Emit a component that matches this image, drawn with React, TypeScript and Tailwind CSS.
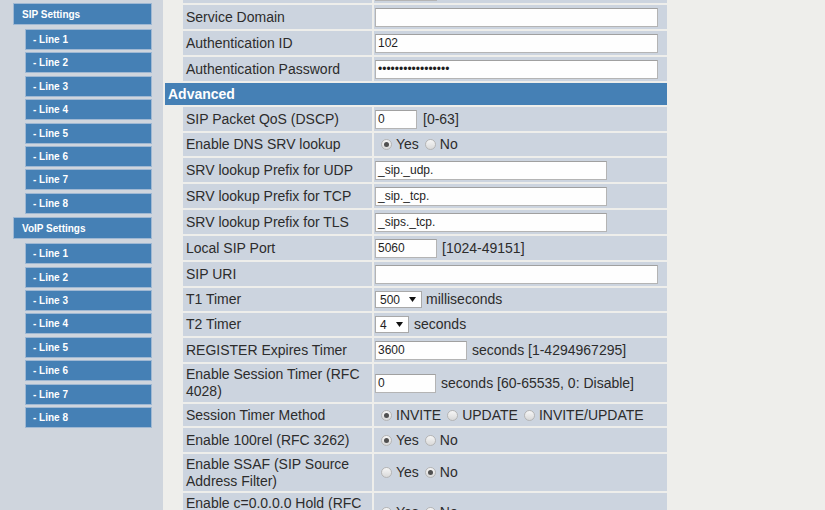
import React from 'react'

const sipLines = ['1', '2', '3', '4', '5', '6', '7', '8']

function NavHeader({ title, first }: { title: string; first?: boolean }) {
  return (
    <div
      className={`${first ? 'mt-0' : 'mt-[3.5px]'} ml-[13px] w-[139px] h-[22px] bg-[#4580b5] border border-[#9fb8d3] flex items-center pl-[8px] text-[10px] font-bold text-white`}
    >
      {title}
    </div>
  )
}

function NavItem({ label, first }: { label: string; first?: boolean }) {
  return (
    <div
      className={`${first ? 'mt-[4px]' : 'mt-[2.4px]'} ml-[25px] w-[127px] h-[21px] bg-[#4580b5] border border-[#9fb8d3] flex items-center pl-[7px] text-[10px] font-bold text-white`}
    >
      - Line {label}
    </div>
  )
}

function TextInput({ w, value = '' }: { w: string; value?: string }) {
  return (
    <span
      className={`${w} h-[19px] inline-flex items-center bg-[#fefefe] border border-[#b4b4b4] border-t-[#a0a0a0] pl-[2px] text-[12px] text-[#1e1e1e] shrink-0`}
    >
      {value}
    </span>
  )
}

function Radio({ checked, label }: { checked?: boolean; label: string }) {
  return (
    <span className="inline-flex items-center">
      <span className="ml-[6px] mr-[4px] w-[11px] h-[11px] rounded-full border border-[#b5b5b5] bg-gradient-to-b from-[#f6f6f6] to-[#d9d9d9] flex items-center justify-center">
        {checked && <span className="w-[5px] h-[5px] rounded-full bg-[#505050]" />}
      </span>
      <span>{label}</span>
    </span>
  )
}

function Select({ w, value }: { w: string; value: string }) {
  return (
    <span
      className={`${w} h-[17px] inline-flex items-center justify-between bg-white border border-[#a9a9a9] pl-[4px] pr-[5px] text-[12px] text-[#1e1e1e]`}
    >
      {value}
      <svg width="7" height="5" viewBox="0 0 7 5">
        <path d="M0 0H7L3.5 5Z" fill="#111" />
      </svg>
    </span>
  )
}

type Row = { label: React.ReactNode; h: string; value: React.ReactNode }

const rows: Row[] = [
  // row scrolled above the top edge, only its bottom shows
  { label: '', h: 'h-[24px]', value: <TextInput w="w-[62px]" /> },
  { label: 'Service Domain', h: 'h-[24px]', value: <TextInput w="w-[283px]" /> },
  { label: 'Authentication ID', h: 'h-[24px]', value: <TextInput w="w-[283px]" value="102" /> },
  {
    label: 'Authentication Password',
    h: 'h-[24px]',
    value: <TextInput w="w-[283px]" value="•••••••••••••••••" />,
  },
]

const advanced: Row[] = [
  {
    label: 'SIP Packet QoS (DSCP)',
    h: 'h-[24px]',
    value: (
      <>
        <TextInput w="w-[42px]" value="0" />
        <span className="ml-[6px]">[0-63]</span>
      </>
    ),
  },
  {
    label: 'Enable DNS SRV lookup',
    h: 'h-[23px]',
    value: (
      <>
        <Radio checked label="Yes" />
        <Radio label="No" />
      </>
    ),
  },
  { label: 'SRV lookup Prefix for UDP', h: 'h-[24px]', value: <TextInput w="w-[232px]" value="_sip._udp." /> },
  { label: 'SRV lookup Prefix for TCP', h: 'h-[24px]', value: <TextInput w="w-[232px]" value="_sip._tcp." /> },
  { label: 'SRV lookup Prefix for TLS', h: 'h-[24px]', value: <TextInput w="w-[232px]" value="_sips._tcp." /> },
  {
    label: 'Local SIP Port',
    h: 'h-[24px]',
    value: (
      <>
        <TextInput w="w-[62px]" value="5060" />
        <span className="ml-[5px]">[1024-49151]</span>
      </>
    ),
  },
  { label: 'SIP URI', h: 'h-[24px]', value: <TextInput w="w-[283px]" /> },
  {
    label: 'T1 Timer',
    h: 'h-[23px]',
    value: (
      <>
        <Select w="w-[47px]" value="500" />
        <span className="ml-[4px]">milliseconds</span>
      </>
    ),
  },
  {
    label: 'T2 Timer',
    h: 'h-[23px]',
    value: (
      <>
        <Select w="w-[34px]" value="4" />
        <span className="ml-[5px]">seconds</span>
      </>
    ),
  },
  {
    label: 'REGISTER Expires Timer',
    h: 'h-[24px]',
    value: (
      <>
        <TextInput w="w-[92px]" value="3600" />
        <span className="ml-[5px]">seconds [1-4294967295]</span>
      </>
    ),
  },
  {
    label: (
      <>
        Enable Session Timer (RFC
        <br />
        4028)
      </>
    ),
    h: 'h-[38px]',
    value: (
      <>
        <TextInput w="w-[61px]" value="0" />
        <span className="ml-[5px]">seconds [60-65535, 0: Disable]</span>
      </>
    ),
  },
  {
    label: 'Session Timer Method',
    h: 'h-[22px]',
    value: (
      <>
        <Radio checked label="INVITE" />
        <Radio label="UPDATE" />
        <Radio label="INVITE/UPDATE" />
      </>
    ),
  },
  {
    label: 'Enable 100rel (RFC 3262)',
    h: 'h-[24px]',
    value: (
      <>
        <Radio checked label="Yes" />
        <Radio label="No" />
      </>
    ),
  },
  {
    label: (
      <>
        Enable SSAF (SIP Source
        <br />
        Address Filter)
      </>
    ),
    h: 'h-[37px]',
    value: (
      <>
        <Radio label="Yes" />
        <Radio checked label="No" />
      </>
    ),
  },
  {
    label: (
      <>
        Enable c=0.0.0.0 Hold (RFC
        <br />
        2543)
      </>
    ),
    h: 'h-[38px]',
    value: (
      <>
        <Radio label="Yes" />
        <Radio checked label="No" />
      </>
    ),
  },
]

function FormRow({ row }: { row: Row }) {
  return (
    <tr>
      <td className="w-[16px] p-0" />
      <td className={`${row.h} w-[189px] p-0 pl-[3px] bg-[#ccd4df] align-middle leading-[17px]`}>
        {row.label}
      </td>
      <td className={`${row.h} w-[293px] p-0 pl-[1px] bg-[#ccd4df] align-middle`}>
        <div className="flex items-center">{row.value}</div>
      </td>
    </tr>
  )
}

export default function App() {
  return (
    <div className="w-[825px] h-[510px] overflow-hidden flex bg-[#eeeeeb] font-['Liberation_Sans',Arial,sans-serif] text-[14px] text-[#2c2c2c]">
      {/* Left: nav */}
      <aside className="w-[163px] shrink-0 bg-[#cfd5dd] pt-[3px]">
        <NavHeader title="SIP Settings" first />
        {sipLines.map((n, i) => (
          <NavItem key={'s' + n} label={n} first={i === 0} />
        ))}
        <NavHeader title="VoIP Settings" />
        {sipLines.map((n, i) => (
          <NavItem key={'v' + n} label={n} first={i === 0} />
        ))}
      </aside>

      {/* Right: settings table */}
      <main className="flex-1 overflow-hidden">
        <table className="-mt-[23px] border-separate border-spacing-[2px] w-[506px]">
          <tbody>
            {rows.map((r, i) => (
              <FormRow key={i} row={r} />
            ))}
            <tr>
              <td
                colSpan={3}
                className="h-[22px] p-0 pl-[3px] bg-[#4580b5] text-white font-bold align-middle"
              >
                Advanced
              </td>
            </tr>
            {advanced.map((r, i) => (
              <FormRow key={'a' + i} row={r} />
            ))}
          </tbody>
        </table>
      </main>
    </div>
  )
}
